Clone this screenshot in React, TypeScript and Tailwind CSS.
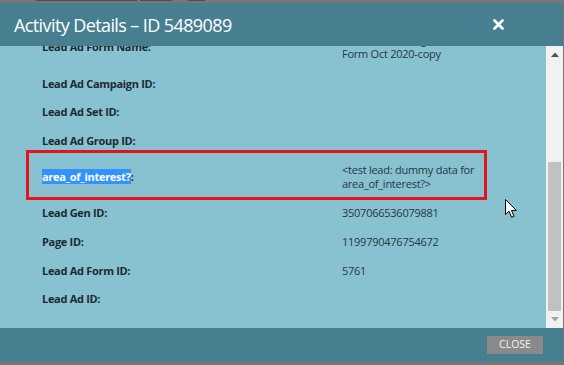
import React from "react";

type Row = { label: string; value?: React.ReactNode; mt: string };

const rows: Row[] = [
  { label: "Lead Ad Campaign ID:", mt: "mt-[15px]" },
  { label: "Lead Ad Set ID:", mt: "mt-[12px]" },
  { label: "Lead Ad Group ID:", mt: "mt-[13px]" },
];

const rowsAfter: Row[] = [
  { label: "Lead Gen ID:", value: "3507066536079881", mt: "mt-[5px]" },
  { label: "Page ID:", value: "1199790476754672", mt: "mt-[13px]" },
  { label: "Lead Ad Form ID:", value: "5761", mt: "mt-[13px]" },
  { label: "Lead Ad ID:", mt: "mt-[12px]" },
];

function SimpleRow({ r }: { r: Row }) {
  return (
    <div className={`${r.mt} pl-[42px] grid grid-cols-[300px_1fr] items-center`}>
      <div className="text-[11px] leading-[16px] font-bold tracking-[-0.3px] text-[#1b2a30]">{r.label}</div>
      <div className="text-[11px] leading-[16px] tracking-[-0.25px] text-[#26383f]">{r.value}</div>
    </div>
  );
}

export default function App() {
  return (
    <div
      className="w-[564px] h-[365px] bg-[#777777] flex flex-col relative overflow-hidden"
      style={{ fontFamily: '"Open Sans", "Noto Sans", sans-serif' }}
    >
      {/* top strip */}
      <div className="h-[3px] flex items-start">
        <div className="ml-[36px] w-[101px] h-[1px] bg-[#4e4e4e]" />
        <div className="ml-[3px] w-[32px] h-[1px] bg-[#4e4e4e]" />
        <div className="ml-[16px] w-[17px] h-[1px] bg-[#4e4e4e]" />
      </div>
      <div className="flex-1 flex flex-col mr-[1px]">
        {/* header */}
        <div className="h-[43px] bg-[#477f91] flex items-center justify-between pl-[14px] pr-[59px]">
          <div className="text-[18px] leading-[26px] text-white tracking-[-0.6px]">Activity Details – ID 5489089</div>
          <svg width="11" height="11" viewBox="0 0 11 11">
            <path d="M1.5 1.5 L9.5 9.5 M9.5 1.5 L1.5 9.5" stroke="white" strokeWidth="2.6" strokeLinecap="round" />
          </svg>
        </div>
        {/* body */}
        <div className="h-[282px] flex bg-[#88c1d0]">
          <div className="flex-1 overflow-hidden relative">
            <div className="mt-[-13px] flex flex-col">
              {/* Lead Ad Form Name */}
              <div className="pl-[42px] grid grid-cols-[300px_1fr] items-center">
                <div className="text-[11px] leading-[16px] font-bold tracking-[-0.3px] text-[#1b2a30]">Lead Ad Form Name:</div>
                <div className="text-[11px] leading-[14px] tracking-[-0.25px] text-[#26383f]">
                  Lead Gen Testing
                  <br />
                  Form Oct 2020-copy
                </div>
              </div>
              {rows.map((r) => (
                <SimpleRow key={r.label} r={r} />
              ))}
              {/* highlighted row */}
              <div className="mt-[1px] ml-[26px] w-[461px] border-[3px] border-[#e3141b] pl-[13px] pt-[10px] pb-[6px] grid grid-cols-[300px_1fr] items-center">
                <div className="text-[11px] leading-[14px] font-bold tracking-[-0.3px] text-[#1b2a30]">
                  <span className="bg-[#3392fb] text-white">area_of_interest?</span>:
                </div>
                <div className="text-[11px] leading-[14px] tracking-[-0.25px] text-[#26383f]">
                  &lt;test lead: dummy data for
                  <br />
                  area_of_interest?&gt;
                </div>
              </div>
              {rowsAfter.map((r) => (
                <SimpleRow key={r.label} r={r} />
              ))}
            </div>
            {/* mouse cursor */}
            <svg className="absolute left-[505px] top-[153px]" width="13" height="20" viewBox="0 0 13 20">
              <path
                d="M0.5 0.5 L0.5 15.5 L4 12.2 L6.6 18.3 L9 17.3 L6.5 11.4 L11.3 11.4 Z"
                fill="white"
                stroke="black"
                strokeWidth="1"
                strokeLinejoin="round"
              />
            </svg>
          </div>
          {/* scrollbar */}
          <div className="w-[17px] bg-[#f1f1f1] flex flex-col">
            <div className="h-[17px] flex items-center justify-center">
              <svg width="8" height="5" viewBox="0 0 8 5">
                <path d="M0 5 L4 0.5 L8 5 Z" fill="#505050" />
              </svg>
            </div>
            <div className="flex-1">
              <div className="mt-[99px] mx-[2px] h-[149px] bg-[#c1c1c1]" />
            </div>
            <div className="h-[17px] flex items-center justify-center">
              <svg width="8" height="5" viewBox="0 0 8 5">
                <path d="M0 0 L4 4.5 L8 0 Z" fill="#a3a3a3" />
              </svg>
            </div>
          </div>
        </div>
        {/* footer */}
        <div className="h-[34px] bg-[#477f91] flex items-center justify-end pr-[20px]">
          <div className="w-[56px] h-[18px] bg-[#8a8a8a] flex items-center justify-center text-[10.5px] text-[#f2f2f2] tracking-[0px]">
            CLOSE
          </div>
        </div>
      </div>
      <div className="h-[3px]" />
    </div>
  );
}
